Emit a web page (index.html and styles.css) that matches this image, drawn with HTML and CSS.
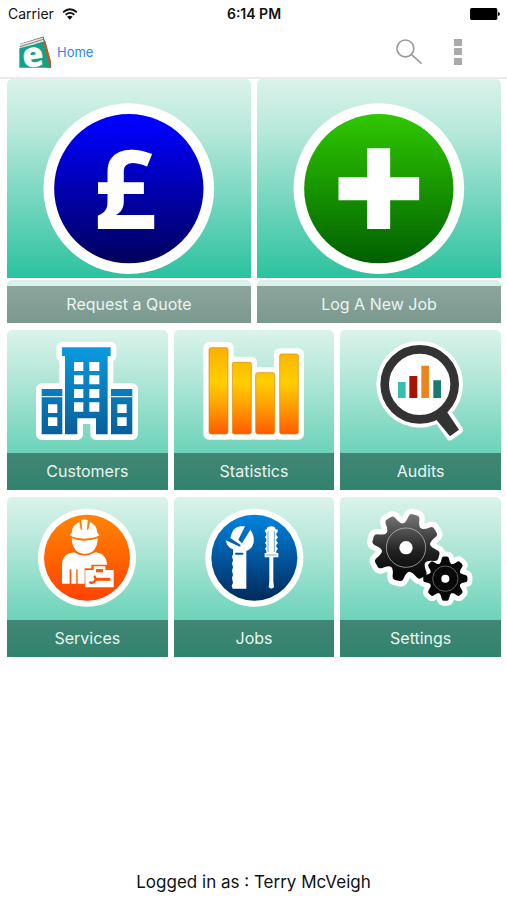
FILE: index.html
```
<!DOCTYPE html>
<html lang="en">

<head>
    <meta charset="UTF-8">
    <meta name="viewport" content="width=device-width, initial-scale=1.0">
    <title>Home</title>
    <link rel="stylesheet" href="styles.css">
</head>

<body>
    <div class="statusBar">
        <div class="carrier">
            <span>Carrier</span>
            <svg class="wifi" viewBox="0 0 45 34">
                <path d="M3 12Q22 -5 42 12M10 19Q22 9 35 19" fill="none" stroke="#111" stroke-width="5" />
                <path d="M22 33L14 25Q22 19 30 25Z" fill="#111" />
            </svg>
        </div>
        <div class="clock">6:14 PM</div>
        <div class="power">
            <svg class="battery" viewBox="0 0 90 36">
                <rect width="82" height="36" rx="5" />
                <path d="M84 12Q90 13 90 18T84 24Z" />
            </svg>
        </div>
    </div>

    <header class="navBar">
        <a class="brand" href="#">
            <svg class="logo" viewBox="56 107 98 97">
                <path d="M58 131L131 108L154 185V204H145L130 130Z" fill="#555c50" />
                <path d="M60 131L129 111L132 124L59 144Z" fill="#dfe3df" />
                <path d="M59 139L130 117" stroke="#7f8985" stroke-width="3" />
                <path d="M130 125L137 122L154 185L152 204H144Z" fill="#c0582c" />
                <path d="M57 144L131 125L151 204H57Z" fill="#16a184" />
                <text class="logoLetter" x="99" y="201" transform="rotate(-8 101 170)">e</text>
            </svg>
            <span>Home</span>
        </a>
        <div class="navButtons">
            <button class="iconBtn" type="button" aria-label="Search">
                <svg class="searchIcon" viewBox="428 115 80 78">
                    <circle cx="457" cy="143" r="26" />
                    <path d="M475 161L507 190" />
                </svg>
            </button>
            <button class="iconBtn" type="button" aria-label="More">
                <svg class="moreIcon" viewBox="0 0 8 26">
                    <rect width="8" height="7" />
                    <rect y="9" width="8" height="7" />
                    <rect y="19" width="8" height="7" />
                </svg>
            </button>
        </div>
    </header>

    <main class="menu">
        <div class="row bigRow">
            <a class="bigTile" href="#">
                <svg class="bigPic" viewBox="22 12 731 597">
                    <defs>
                        <linearGradient id="blueFill" x2="0" y2="1">
                            <stop offset=".05" stop-color="#00f" />
                            <stop offset="1" stop-color="#00005c" />
                        </linearGradient>
                    </defs>
                    <circle cx="387" cy="341" r="256" fill="#fff" />
                    <circle cx="387" cy="341" r="224" fill="url(#blueFill)" />
                    <text class="pound" x="375" y="461">£</text>
                </svg>
                <span class="bigLabel">Request a Quote</span>
            </a>
            <a class="bigTile" href="#">
                <svg class="bigPic" viewBox="14 12 731 597">
                    <defs>
                        <linearGradient id="greenFill" x2="0" y2="1">
                            <stop offset="0" stop-color="#2fc800" />
                            <stop offset="1" stop-color="#006000" />
                        </linearGradient>
                    </defs>
                    <circle cx="379" cy="341" r="256" fill="#fff" />
                    <circle cx="379" cy="341" r="224" fill="url(#greenFill)" />
                    <path d="M344 220H413V307H500V376H413V462H344V376H258V307H344Z" fill="#fff" />
                </svg>
                <span class="bigLabel">Log A New Job</span>
            </a>
        </div>

        <div class="row smallRow">
            <a class="tile" href="#">
                <svg class="pic" viewBox="22 15 480 369">
                    <defs>
                        <linearGradient id="building" gradientUnits="userSpaceOnUse" x1="0" y1="67" x2="0" y2="328">
                            <stop offset="0" stop-color="#0a9ae0" />
                            <stop offset="1" stop-color="#075f99" />
                        </linearGradient>
                    </defs>
                    <g fill="url(#building)">
                        <path d="M186 67H332V93H323V328H288V280H232V328H195V93H186ZM125 192H187V328H125ZM333 192H397V328H333Z" stroke="#fff" stroke-width="34" stroke-linejoin="round" />
                        <path d="M186 67H332V93H323V328H288V280H232V328H195V93H186ZM125 192H187V328H125ZM333 192H397V328H333Z" />
                    </g>
                    <path d="M125 215H187M333 215H397" stroke="#d5ecf8" stroke-width="4" />
                    <path d="M222 111h28v27h-28zM268 111h30v27h-30zM222 151h28v27h-28zM268 151h30v27h-30zM222 192h28v27h-28zM268 192h30v27h-30zM222 232h28v28h-28zM268 232h30v28h-30zM144 238h28v26h-28zM144 277h28v26h-28zM352 238h28v26h-28zM352 277h28v26h-28z" fill="#fff" />
                </svg>
                <span class="label">Customers</span>
            </a>
            <a class="tile" href="#">
                <svg class="pic" viewBox="12 15 480 369">
                    <defs>
                        <linearGradient id="bars" gradientUnits="userSpaceOnUse" x1="0" y1="67" x2="0" y2="328">
                            <stop offset="0" stop-color="#f9b000" />
                            <stop offset=".4" stop-color="#ffce00" />
                            <stop offset=".65" stop-color="#ffa400" />
                            <stop offset="1" stop-color="#ff5a00" />
                        </linearGradient>
                    </defs>
                    <g fill="#fff" stroke="#fff" stroke-width="34" stroke-linejoin="round">
                        <path d="M116 68h57v259h-57zM186 112h57v215h-57zM256 143h57v184h-57zM328 87h56v240h-56z" />
                    </g>
                    <g fill="url(#bars)" stroke="#d98a00" stroke-width="2">
                        <rect x="116" y="68" width="57" height="259" rx="6" />
                        <rect x="186" y="112" width="57" height="215" rx="6" />
                        <rect x="256" y="143" width="57" height="184" rx="6" />
                        <rect x="328" y="87" width="56" height="240" rx="6" />
                    </g>
                </svg>
                <span class="label">Statistics</span>
            </a>
            <a class="tile" href="#">
                <svg class="pic" viewBox="12 15 480 369">
                    <path d="M302 278L331 260L368 314L341 334Z" fill="#fff" stroke="#fff" stroke-width="24" stroke-linejoin="round" />
                    <circle cx="250" cy="178" r="130" fill="#fff" />
                    <path d="M298 282L330 258L368 314L341 334Z" fill="#333" />
                    <circle cx="250" cy="178" r="105" fill="#fff" stroke="#333" stroke-width="26" />
                    <path d="M185 171h23v48h-23z" fill="#35bdb0" />
                    <path d="M219 153h24v66h-24z" fill="#a31604" />
                    <path d="M255 122h23v97h-23z" fill="#e98420" />
                    <path d="M291 166h23v53h-23z" fill="#187b6c" />
                </svg>
                <span class="label">Audits</span>
            </a>
        </div>

        <div class="row smallRow">
            <a class="tile" href="#">
                <svg class="pic" viewBox="22 15 480 369">
                    <defs>
                        <linearGradient id="orangeFill" x2="0" y2="1">
                            <stop offset="0" stop-color="#ff8500" />
                            <stop offset="1" stop-color="#ff4200" />
                        </linearGradient>
                    </defs>
                    <circle cx="261" cy="197" r="147" fill="#fff" />
                    <circle cx="261" cy="197" r="129" fill="url(#orangeFill)" />
                    <g fill="#fff">
                        <path d="M215 122Q217 98 238 90L242 113H246L244 84Q254 81 263 84L261 113H265L270 90Q290 98 292 122L299 130Q281 140 253 140Q226 140 209 130Z" />
                        <path d="M215 139Q253 153 293 139Q292 184 254 186Q218 184 215 139Z" />
                        <path d="M186 275V214Q188 186 221 181Q252 200 286 181Q320 185 321 218H274V229H254V275H233V232H229V275H214V232H209V275Z" />
                        <path d="M256 234H281V223H316V234H341V286H256Z" />
                    </g>
                    <path d="M288 235V231H309V241H288Z" fill="#ff5a00" />
                    <path d="M287 262H331" stroke="#ff5200" stroke-width="9" />
                    <path d="M282 252A11 11 0 1 1 268 270" fill="none" stroke="#ff5200" stroke-width="7" />
                </svg>
                <span class="label">Services</span>
            </a>
            <a class="tile" href="#">
                <svg class="pic" viewBox="12 15 480 369">
                    <defs>
                        <linearGradient id="navyFill" x2="0" y2="1">
                            <stop offset="0" stop-color="#0083df" />
                            <stop offset="1" stop-color="#002a5c" />
                        </linearGradient>
                    </defs>
                    <circle cx="252" cy="197" r="147" fill="#fff" />
                    <circle cx="252" cy="197" r="129" fill="url(#navyFill)" />
                    <g fill="#fff">
                        <path d="M180 138Q187 105 210 103H224L204 143L215 154L240 113Q253 131 250 152Q245 171 228 177V290H187L184 282L188 272L185 258L188 248L185 236L188 226L185 214L188 205L185 192L188 188V172Q171 168 166 145L209 164L211 159Z" />
                        <path d="M290 111Q290 103 303 103Q315 103 315 111L322 113V120L318 124V130L323 136L318 142V147L323 153L318 159V164L323 170L318 176V183H324V196H309V268L311 285Q303 294 295 285L297 268V196H283V183H288V176L284 170L288 164V159L284 153L288 147V142L284 136L288 130V124L284 120V113Z" />
                    </g>
                    <path d="M197 185H216" stroke="#00569d" stroke-width="6" stroke-linecap="round" />
                    <path d="M293 118V180M312 118V180M288 189H319" stroke="#2b7bbd" stroke-width="2" />
                </svg>
                <span class="label">Jobs</span>
            </a>
            <a class="tile" href="#">
                <svg class="pic" viewBox="12 15 480 369">
                    <defs>
                        <linearGradient id="gearFill" gradientUnits="userSpaceOnUse" x1="0" y1="-100" x2="0" y2="100">
                            <stop offset="0" stop-color="#777" />
                            <stop offset=".55" stop-color="#222" />
                            <stop offset="1" stop-color="#000" />
                        </linearGradient>
                        <path id="tooth" d="M-28 -66Q-19 -74 -17 -92Q-15 -102 -7 -102H7Q15 -102 17 -92Q19 -74 28 -66Z" />
                        <g id="gear">
                            <circle r="73" />
                            <use href="#tooth" />
                            <use href="#tooth" transform="rotate(45)" />
                            <use href="#tooth" transform="rotate(90)" />
                            <use href="#tooth" transform="rotate(135)" />
                            <use href="#tooth" transform="rotate(180)" />
                            <use href="#tooth" transform="rotate(225)" />
                            <use href="#tooth" transform="rotate(270)" />
                            <use href="#tooth" transform="rotate(315)" />
                        </g>
                        <mask id="gearMask" maskUnits="userSpaceOnUse" x="-110" y="-110" width="220" height="220">
                            <use href="#gear" fill="#fff" transform="rotate(15)" />
                        </mask>
                    </defs>
                    <g fill="#fff" stroke="#fff" stroke-linejoin="round">
                        <use href="#gear" stroke-width="32" transform="translate(209 167) rotate(15)" />
                        <use href="#gear" stroke-width="46" transform="translate(327 260) scale(.65)" />
                    </g>
                    <g transform="translate(209 167)">
                        <rect x="-110" y="-110" width="220" height="220" fill="url(#gearFill)" mask="url(#gearMask)" />
                        <circle r="59" fill="none" stroke="#ccc" stroke-width="2" />
                        <circle r="20" fill="#fff" />
                    </g>
                    <use href="#gear" fill="#080808" transform="translate(327 260) scale(.65)" />
                    <circle cx="327" cy="260" r="38" fill="none" stroke="#888" stroke-width="2" />
                    <circle cx="327" cy="260" r="12" fill="#fff" />
                </svg>
                <span class="label">Settings</span>
            </a>
        </div>
    </main>

    <footer class="footer">Logged in as : Terry McVeigh</footer>
</body>

</html>
```
FILE: styles.css
```
* {
    box-sizing: border-box;
}

body {
    margin: 0;
    min-height: 100vh;
    display: flex;
    flex-direction: column;
    background-color: white;
    color: #111;
    font-family: Inter, "Liberation Sans", sans-serif;
}

a {
    color: inherit;
    text-decoration: none;
}

svg {
    display: block;
}

/* status bar */
.statusBar {
    display: grid;
    grid-template-columns: 1fr auto 1fr;
    align-items: center;
    height: 27px;
    padding: 0 7px 0 8px;
    font-size: 14px;
}

.carrier {
    display: flex;
    align-items: center;
    gap: 8px;
}

.wifi {
    width: 16px;
    height: 12px;
}

.clock {
    font-weight: 600;
}

.power {
    display: flex;
    justify-content: flex-end;
}

.battery {
    width: 30px;
    height: 12px;
}

/* navigation bar */
.navBar {
    display: flex;
    align-items: center;
    justify-content: space-between;
    height: 52px;
    padding: 0 45px 0 19px;
    border-bottom: 2px solid #ebebeb;
}

.brand {
    display: flex;
    align-items: center;
    gap: 6px;
    color: #2a86f5;
    font-size: 13px;
}

.logo {
    width: 32px;
    height: 32px;
    overflow: visible;
}

.logoLetter {
    font: 800 106px "Open Sans", sans-serif;
    fill: white;
    text-anchor: middle;
}

.navButtons {
    display: flex;
    align-items: center;
    gap: 32px;
}

.iconBtn {
    padding: 0;
    border: 0;
    background: none;
    cursor: pointer;
}

.searchIcon {
    width: 26px;
    height: 26px;
    fill: none;
    stroke: #999;
    stroke-width: 5px;
}

.moreIcon {
    width: 8px;
    height: 26px;
    fill: #aaa;
}

/* menu tiles */
.menu {
    display: flex;
    flex-direction: column;
    gap: 7px;
    padding: 0 6px 0 7px;
}

.row {
    display: grid;
    gap: 6px;
}

.bigRow {
    grid-template-columns: repeat(2, 1fr);
}

.smallRow {
    grid-template-columns: repeat(3, 1fr);
}

.bigPic {
    width: 100%;
    height: 199px;
    border-radius: 5px 5px 0 0;
    background: linear-gradient(#dbf3eb, #b9e9db 25%, #2bc29f);
}

.pound {
    font: bold 330px "Open Sans", sans-serif;
    fill: white;
    text-anchor: middle;
}

.bigLabel {
    display: block;
    margin-top: 2px;
    border-top: 6px solid #d9f1ea;
    border-radius: 5px 5px 0 0;
    background: linear-gradient(#8ca59d, #7a998f);
}

.bigLabel,
.label {
    color: #e9f5f1;
    font-size: 16px;
    line-height: 37px;
    text-align: center;
}

.tile {
    border-radius: 5px 5px 0 0;
    overflow: hidden;
}

.pic {
    width: 100%;
    height: 123px;
    background: linear-gradient(#dbf3eb, #b9e9db 33%, #6cd3b9);
}

.label {
    display: block;
    background: linear-gradient(#418674, #31836e);
}

.footer {
    margin-top: auto;
    padding-bottom: 6px;
    font-size: 17px;
    line-height: 24px;
    text-align: center;
}
```
